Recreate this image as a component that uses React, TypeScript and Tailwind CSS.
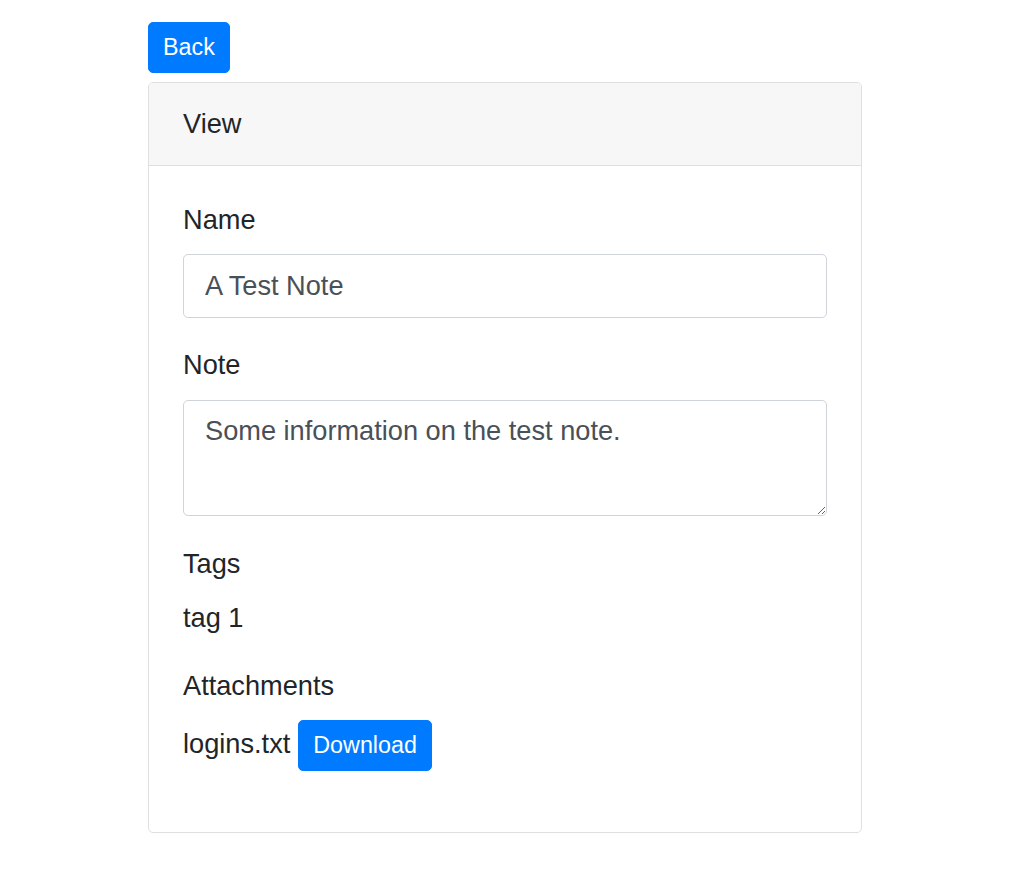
import React from 'react';

const font = { fontFamily: '"Liberation Sans", Arial, sans-serif' };

const Label = ({ children, className = '' }: { children: React.ReactNode; className?: string }) => (
  <div className={`text-[27.2px] leading-[40px] text-[#212529] ${className}`}>{children}</div>
);

const Button = ({ children, className = '' }: { children: React.ReactNode; className?: string }) => (
  <button
    type="button"
    className={`bg-[#007bff] text-white text-[23.3px] leading-[35px] py-[7px] px-[14px] border border-[#007bff] rounded-[5px] ${className}`}
  >
    {children}
  </button>
);

export default function App() {
  return (
    <div className="min-h-screen bg-white pl-[148px] pt-[22px]" style={font}>
      <Button>Back</Button>

      <div className="mt-[9px] w-[714px] border border-[#dfdfdf] rounded-[5px] overflow-hidden">
        {/* header */}
        <div className="bg-[#f7f7f7] border-b border-[#dfdfdf] px-[34px] py-[21px]">
          <div className="text-[27.2px] leading-[40px] text-[#212529]">View</div>
        </div>

        {/* body */}
        <div className="px-[34px] pt-[34px] pb-[34px]">
          <Label className="mb-[14px]">Name</Label>
          <input
            readOnly
            value="A Test Note"
            className="block w-full h-[64px] px-[21px] border border-[#ced4da] rounded-[5px] text-[27.2px] leading-[40px] text-[#495057] outline-none"
          />

          <Label className="mt-[27px] mb-[15px]">Note</Label>
          <textarea
            readOnly
            value="Some information on the test note."
            className="block w-full h-[116px] px-[21px] py-[10px] border border-[#ced4da] rounded-[5px] text-[27.2px] leading-[40px] text-[#495057] outline-none"
          />

          <Label className="mt-[28px]">Tags</Label>
          <Label className="mt-[14px]">tag 1</Label>

          <Label className="mt-[28px]">Attachments</Label>
          <div className="mt-[14px] mb-[27px] flex items-baseline">
            <span className="text-[27.2px] leading-[40px] text-[#212529]">logins.txt</span>
            <Button className="ml-[8px]">Download</Button>
          </div>
        </div>
      </div>
    </div>
  );
}
